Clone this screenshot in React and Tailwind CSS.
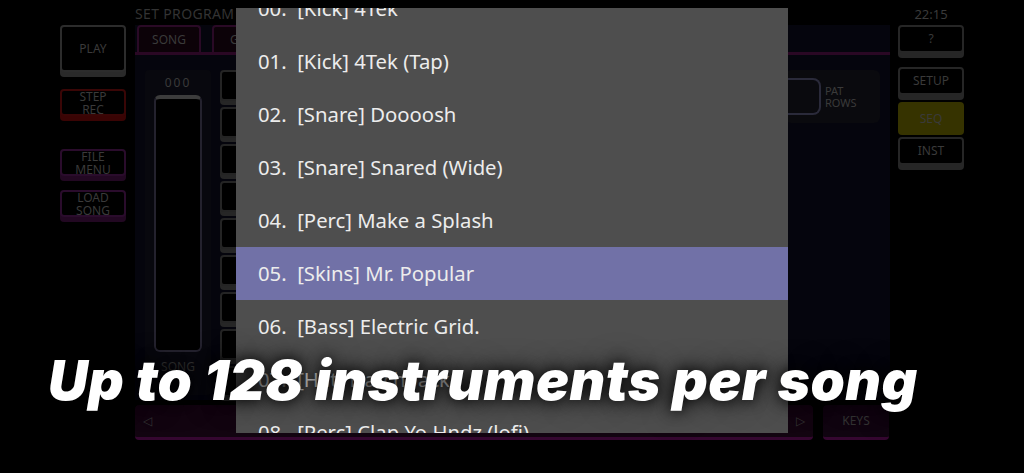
const items = [
  "00.  [Kick] 4Tek",
  "01.  [Kick] 4Tek (Tap)",
  "02.  [Snare] Doooosh",
  "03.  [Snare] Snared (Wide)",
  "04.  [Perc] Make a Splash",
  "05.  [Skins] Mr. Popular",
  "06.  [Bass] Electric Grid.",
  "07.  [Hat] Hatchback",
  "08.  [Perc] Clap Yo Hndz (lofi)",
];

const SideButton = ({ label, tone = "gray", tall }) => {
  const tones = {
    gray: "border-[#2c2c2c] shadow-[0_5px_0_#2a2a2a]",
    red: "border-[#3a0606] shadow-[0_5px_0_#3a0404]",
    purple: "border-[#2a0c2c] shadow-[0_5px_0_#220822]",
  };
  return (
    <div
      className={`w-[66px] ${tall ? "h-[47px]" : "h-[27px]"} rounded-[4px] border-2 bg-black flex items-center justify-center text-center text-[12px] leading-[13px] text-[#3a3a3a] ${tones[tone]}`}
    >
      {label}
    </div>
  );
};

const RightButton = ({ label, active }) => (
  <div
    className={`w-[66px] h-[28px] rounded-[4px] flex items-center justify-center text-[12px] text-[#3a3a3a] ${
      active
        ? "bg-[#363300] h-[33px]"
        : "bg-black border-2 border-[#262626] shadow-[0_5px_0_#262626]"
    }`}
  >
    {label}
  </div>
);

export default function App() {
  return (
    <div
      className="relative w-[1024px] h-[473px] bg-black overflow-hidden flex"
      style={{ fontFamily: '"Noto Sans", "Open Sans", sans-serif' }}
    >
      {/* left column */}
      <div className="w-[135px] pl-[60px] pt-[25px] flex flex-col">
        <SideButton label="PLAY" tall />
        <div className="h-[17px]" />
        <SideButton label={<>STEP<br />REC</>} tone="red" />
        <div className="h-[33px]" />
        <SideButton label={<>FILE<br />MENU</>} tone="purple" />
        <div className="h-[14px]" />
        <SideButton label={<>LOAD<br />SONG</>} tone="purple" />
      </div>

      {/* middle */}
      <div className="w-[755px] flex flex-col">
        <div className="h-[25px] text-[14px] leading-[28px] text-[#333] tracking-wide">SET PROGRAM</div>
        <div className="h-[375px] bg-[#05050d] flex flex-col">
          <div className="h-[30px] flex gap-[11px] px-[2px] border-b-[3px] border-[#2a0824]">
            <div className="w-[64px] rounded-t-[4px] border-2 border-b-0 border-[#2a0a26] bg-[#0c0208] flex items-center justify-center text-[12px] text-[#3a3a3a]">SONG</div>
            <div className="w-[100px] rounded-t-[4px] border-2 border-b-0 border-[#2a0a26] bg-[#0c0208] flex items-center pl-[16px] text-[12px] text-[#3a3a3a]">GROUP</div>
          </div>
          <div className="flex flex-1 pt-[15px] pl-[10px]">
            <div className="w-[66px] h-[325px] rounded-[4px] bg-[#08080e] flex flex-col items-center pt-[4px]">
              <div className="text-[12px] text-[#3a3a3a] tracking-[2px]">000</div>
              <div className="mt-[3px] w-[48px] h-[257px] rounded-[6px] border-2 border-[#24222e] border-t-[4px] border-t-[#3c3c3c] bg-black" />
              <div className="mt-[6px] text-[12px] text-[#333]">SONG</div>
            </div>
            <div className="ml-[9px] flex flex-col gap-[6px]">
              {Array.from({ length: 9 }).map((_, i) => (
                <div key={i} className="w-[60px] h-[31px] rounded-[4px] border-2 border-[#242424] bg-black shadow-[0_4px_0_#262626]" />
              ))}
            </div>
            <div className="flex-1 flex justify-end pr-[10px]">
              <div className="flex flex-col items-end gap-[10px]">
                <div className="w-[95px] h-[53px] rounded-[6px] bg-[#0a0a0e] flex items-center">
                  <div className="w-[36px] h-[37px] rounded-r-[8px] border-2 border-l-0 border-[#2a2a3a]" />
                  <div className="ml-[4px] text-[11px] leading-[12px] text-[#3a3a3a]">PAT<br />ROWS</div>
                </div>
                <div className="w-[110px] h-[50px] mr-[95px] border-r-[4px] border-[#3a0c00]" />
              </div>
            </div>
          </div>
        </div>
        <div className="mt-[5px] flex gap-[10px]">
          <div className="w-[678px] h-[35px] rounded-[4px] bg-[#120410] border-b-[3px] border-[#350730] flex items-center justify-between px-[8px] text-[12px] text-[#333]">
            <span>◁</span>
            <span>▷</span>
          </div>
          <div className="w-[66px] h-[35px] rounded-[4px] bg-[#100410] border-b-[3px] border-[#350730] flex items-center justify-center text-[12px] text-[#333]">KEYS</div>
        </div>
      </div>

      {/* right column */}
      <div className="ml-[8px] w-[66px] flex flex-col">
        <div className="h-[25px] text-center text-[13px] leading-[28px] text-[#3a3a3a]">22:15</div>
        <RightButton label="?" />
        <div className="h-[14px]" />
        <RightButton label="SETUP" />
        <div className="h-[7px]" />
        <RightButton label="SEQ" active />
        <div className="h-[2px]" />
        <RightButton label="INST" />
      </div>

      {/* instrument picker dialog */}
      <div className="absolute left-[236px] top-[8px] w-[552px] h-[425px] bg-[#4e4e4e] overflow-hidden">
        <div className="-mt-[26px]">
          {items.map((t, i) => (
            <div
              key={t}
              className={`h-[53px] flex items-center pl-[22px] text-[20.3px] text-[#ececec] whitespace-pre ${
                i === 5 ? "bg-[#7171a7]" : ""
              }`}
            >
              {t}
            </div>
          ))}
        </div>
      </div>

      {/* caption */}
      <div
        className="absolute left-[48px] top-[342px] text-[55px] leading-[76px] font-black italic tracking-[0.5px] text-white whitespace-nowrap [text-shadow:0_0_14px_rgba(0,0,0,0.95),0_0_28px_rgba(0,0,0,0.7)]"
        style={{ fontFamily: 'Inter, Lato, sans-serif' }}
      >
        Up to 128 instruments per song
      </div>
    </div>
  );
}
